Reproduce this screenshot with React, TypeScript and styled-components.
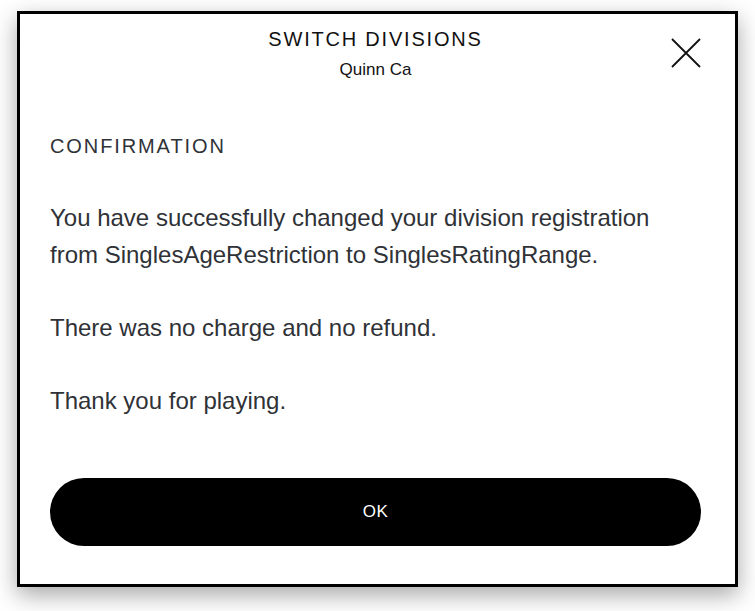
import React from "react";
import styled, { createGlobalStyle } from "styled-components";

const GlobalStyle = createGlobalStyle`
  html, body {
    margin: 0;
    padding: 0;
    background: #ffffff;
  }
  body {
    font-family: "Liberation Sans", Arial, Helvetica, sans-serif;
  }
`;

const Page = styled.div`
  width: 755px;
  height: 611px;
  padding: 11px 0 0 17px;
  box-sizing: border-box;
`;

const Modal = styled.div`
  width: 721px;
  height: 576px;
  box-sizing: border-box;
  border: 3px solid #000;
  background: #fff;
  box-shadow: 0 8px 22px rgba(0, 0, 0, 0.35);
  padding: 12px 34px 38px 30px;
  display: flex;
  flex-direction: column;
`;

const Header = styled.div`
  display: grid;
  grid-template-columns: 1fr auto 1fr;
  align-items: start;
`;

const TitleBlock = styled.div`
  grid-column: 2;
  text-align: center;
`;

const Title = styled.h1`
  margin: 0;
  font-size: 20px;
  font-weight: 400;
  line-height: 26px;
  letter-spacing: 1.8px;
  color: #111;
`;

const Subtitle = styled.div`
  margin-top: 8px;
  font-size: 17px;
  line-height: 20px;
  color: #111;
`;

const CloseButton = styled.button`
  grid-column: 3;
  justify-self: end;
  margin-top: 12px;
  width: 30px;
  height: 30px;
  padding: 0;
  border: none;
  background: none;
  cursor: pointer;
  display: flex;
  align-items: center;
  justify-content: center;
`;

const SectionLabel = styled.h2`
  margin: 53px 0 0;
  font-size: 20px;
  font-weight: 400;
  line-height: 26px;
  letter-spacing: 1.9px;
  color: #2f3237;
`;

const Body = styled.div`
  margin-top: 40px;
  flex: 1;
`;

const Paragraph = styled.p`
  margin: 0 0 36px;
  font-size: 24px;
  line-height: 37px;
  color: #2f3237;
`;

const OkButton = styled.button`
  width: 100%;
  height: 68px;
  border: none;
  border-radius: 34px;
  background: #000;
  color: #fff;
  font-family: inherit;
  font-size: 17px;
  letter-spacing: 0.5px;
  cursor: pointer;
`;

const CloseIcon = () => (
  <svg width="30" height="30" viewBox="0 0 30 30">
    <path d="M1 1 L29 29 M29 1 L1 29" stroke="#111" strokeWidth="1.8" fill="none" />
  </svg>
);

export default function App() {
  return (
    <>
      <GlobalStyle />
      <Page>
        <Modal>
          <Header>
            <TitleBlock>
              <Title>SWITCH DIVISIONS</Title>
              <Subtitle>Quinn Ca</Subtitle>
            </TitleBlock>
            <CloseButton aria-label="Close">
              <CloseIcon />
            </CloseButton>
          </Header>
          <SectionLabel>CONFIRMATION</SectionLabel>
          <Body>
            <Paragraph>
              You have successfully changed your division registration
              <br />
              from SinglesAgeRestriction to SinglesRatingRange.
            </Paragraph>
            <Paragraph>There was no charge and no refund.</Paragraph>
            <Paragraph>Thank you for playing.</Paragraph>
          </Body>
          <OkButton>OK</OkButton>
        </Modal>
      </Page>
    </>
  );
}
